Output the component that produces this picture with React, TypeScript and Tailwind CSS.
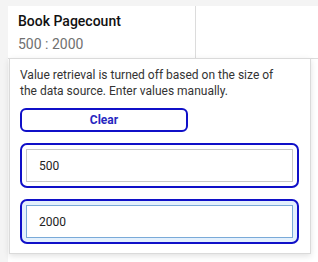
import React from 'react';

const font = { fontFamily: 'Roboto, "Liberation Sans", sans-serif' };

export default function App() {
  return (
    <div className="relative w-[318px] h-[262px] bg-[#f4f4f4] overflow-hidden" style={font}>
      <div className="mt-[6px] ml-[8px] h-[256px] bg-white">
        <div className="flex h-[53px] border-b border-[#dcdcdc]">
          <div className="w-[188px] border-r border-[#dcdcdc] pl-[10px] pt-[5px]">
            <div className="text-[14px] leading-[20px] font-medium text-[#111]">Book Pagecount</div>
            <div className="text-[14px] leading-[20px] text-[#707070] mt-[3px]">500 : 2000</div>
          </div>
          <div className="flex-1" />
        </div>
      </div>

      {/* popup */}
      <div className="absolute left-[9px] top-[58px] w-[302px] h-[196px] bg-white border border-[#dadada] shadow-[0_2px_6px_rgba(0,0,0,0.12)] px-[10px] pt-[8px]">
        <p className="w-[262px] text-[12px] leading-[16px] text-[#333]">
          Value retrieval is turned off based on the size of the data source. Enter values manually.
        </p>
        <button className="mt-[9px] w-[168px] h-[24px] rounded-[6px] border-2 border-[#1010c8] text-[12px] font-bold text-[#2727c0] flex items-center justify-center">
          Clear
        </button>
        <div className="mt-[11px] w-[279px] h-[45px] rounded-[7px] border-2 border-[#1010c8] p-[4px] flex">
          <div className="flex-1 border border-[#c8c8c8] flex items-center pl-[12px] text-[12px] text-[#222]">500</div>
        </div>
        <div className="mt-[11px] w-[279px] h-[45px] rounded-[7px] border-2 border-[#1010c8] p-[4px] flex bg-[#e3f0fd]">
          <div className="flex-1 border border-[#7aaad8] bg-white flex items-center pl-[12px] text-[12px] text-[#222]">2000</div>
        </div>
      </div>
    </div>
  );
}
